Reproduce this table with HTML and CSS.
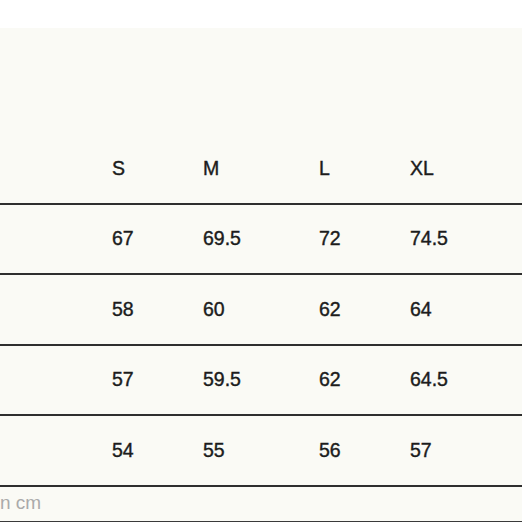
FILE: index.html
```html
<!DOCTYPE html>
<html>
<head>
<meta charset="utf-8">
<link rel="stylesheet" href="styles.css">
</head>
<body>
<div class="top"></div>
<div class="sheet">
  <div class="spacer"></div>
  <div class="row head"><span></span><span>S</span><span>M</span><span>L</span><span>XL</span></div>
  <div class="row"><span></span><span>67</span><span>69.5</span><span>72</span><span>74.5</span></div>
  <div class="row"><span></span><span>58</span><span>60</span><span>62</span><span>64</span></div>
  <div class="row"><span></span><span>57</span><span>59.5</span><span>62</span><span>64.5</span></div>
  <div class="row"><span></span><span>54</span><span>55</span><span>56</span><span>57</span></div>
  <div class="note">n cm</div>
</div>
</body>
</html>
```
FILE: styles.css
```css
html, body {
  margin: 0;
  padding: 0;
  background: #ffffff;
  font-family: "Liberation Sans", Arial, sans-serif;
}
.top {
  height: 28px;
  background: #ffffff;
}
.sheet {
  background: #fafaf5;
  height: 494px;
  box-sizing: border-box;
  border-bottom: 1px solid #3a3a3a;
}
.spacer {
  height: 106px;
}
.row {
  display: grid;
  grid-template-columns: 112px 91px 116px 91px 1fr;
  align-items: center;
  height: 68.5px;
  border-bottom: 2px solid #2e2e2e;
  font-size: 19.5px;
  color: #1c1c1c;
  -webkit-text-stroke: 0.4px #1c1c1c;
}
.note {
  height: 33px;
  display: flex;
  align-items: center;
  font-size: 19px;
  color: #aaaaaa;
  padding-left: 0;
}
```
